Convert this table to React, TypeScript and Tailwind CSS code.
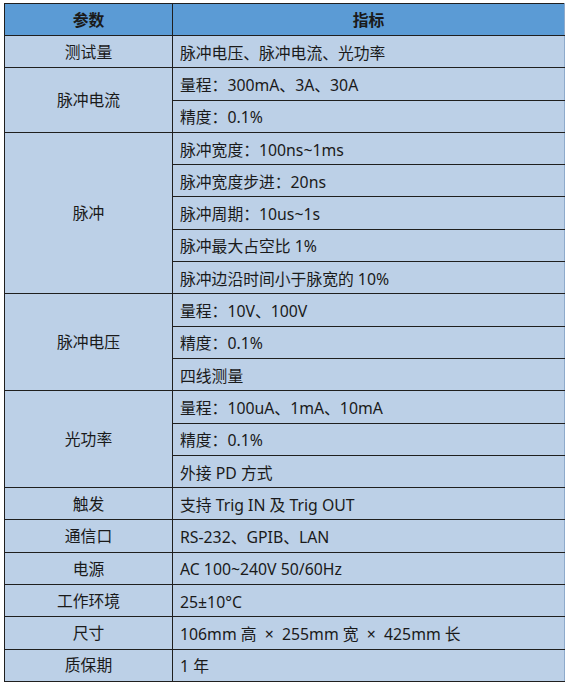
const groups: { label: string; items: string[] }[] = [
  { label: "测试量", items: ["脉冲电压、脉冲电流、光功率"] },
  { label: "脉冲电流", items: ["量程：300mA、3A、30A", "精度：0.1%"] },
  {
    label: "脉冲",
    items: [
      "脉冲宽度：100ns~1ms",
      "脉冲宽度步进：20ns",
      "脉冲周期：10us~1s",
      "脉冲最大占空比 1%",
      "脉冲边沿时间小于脉宽的 10%",
    ],
  },
  { label: "脉冲电压", items: ["量程：10V、100V", "精度：0.1%", "四线测量"] },
  { label: "光功率", items: ["量程：100uA、1mA、10mA", "精度：0.1%", "外接 PD 方式"] },
  { label: "触发", items: ["支持 Trig IN 及 Trig OUT"] },
  { label: "通信口", items: ["RS-232、GPIB、LAN"] },
  { label: "电源", items: ["AC 100~240V 50/60Hz"] },
  { label: "工作环境", items: ["25±10°C"] },
  { label: "尺寸", items: ["106mm 高  ×  255mm 宽  ×  425mm 长"] },
  { label: "质保期", items: ["1 年"] },
];

export default function App() {
  return (
    <div className="w-[571px] h-[687px] bg-white pt-[3px] pl-[4px] font-['Noto_Sans','Noto_Sans_CJK_SC',sans-serif] text-[15.8px] text-[#1a1a1a]">
      <table className="w-[561px] border-collapse table-fixed">
        <colgroup>
          <col className="w-[168px]" />
          <col />
        </colgroup>
        <thead>
          <tr className="h-[32px] bg-[#5b9bd5]">
            <th className="border border-[#1f1f1f] font-bold text-center p-0 pt-[2px]">参数</th>
            <th className="border border-[#1f1f1f] border-r-[#8eaacb] font-bold text-center p-0 pt-[2px]">指标</th>
          </tr>
        </thead>
        <tbody className="bg-[#bcd0e7]">
          {groups.map((g) =>
            g.items.map((item, i) => (
              <tr key={g.label + i} className="h-[32.3px]">
                {i === 0 && (
                  <td
                    rowSpan={g.items.length}
                    className="border border-[#1f1f1f] text-center align-middle p-0 pt-[2px]"
                  >
                    {g.label}
                  </td>
                )}
                <td className="border border-[#1f1f1f] border-r-[#8eaacb] p-0 pl-[7px] pt-[2px] whitespace-pre leading-[26px]">
                  {item}
                </td>
              </tr>
            ))
          )}
        </tbody>
      </table>
    </div>
  );
}
